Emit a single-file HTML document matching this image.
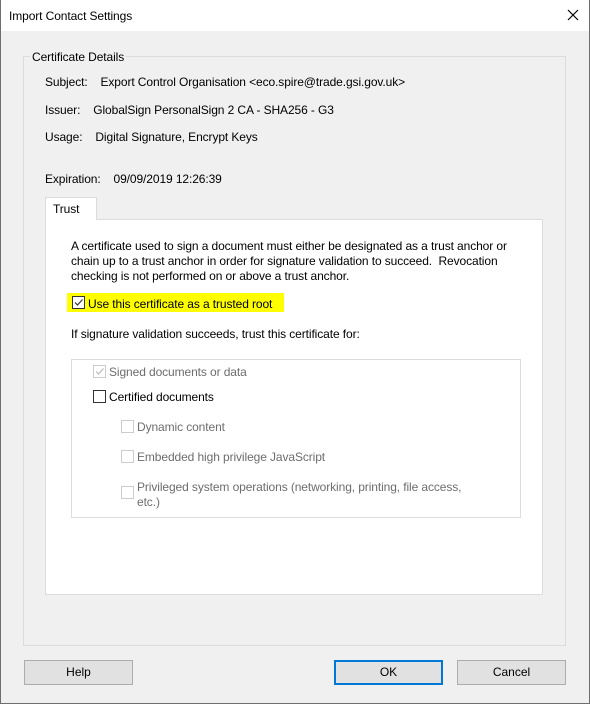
<!DOCTYPE html>
<html><head><style>
*{margin:0;padding:0;box-sizing:border-box}
body{width:590px;height:704px;background:#f0f0f0;font-family:"Liberation Sans",sans-serif;font-size:12px;color:#000;position:relative;overflow:hidden}
.a{position:absolute;white-space:nowrap}
.t{margin-top:1px;letter-spacing:-0.1px}
.cb{position:absolute;width:13px;height:13px;border:1px solid #333;background:#fff}
.cb.d{border-color:#ccc}
.btn{position:absolute;height:25px;border:1px solid #adadad;background:#e1e1e1;text-align:center;line-height:23px}
.g{color:#6d6d6d}
</style></head><body>
<div style="position:absolute;left:0;top:0;width:590px;height:704px;border:1px solid #6e6e6e;border-top:none"></div>
<div style="position:absolute;left:1px;top:0;width:588px;height:31px;background:#fff"></div>
<div class="a t" style="left:9px;top:8px;font-size:12px">Import Contact Settings</div>
<svg class="a" style="left:567px;top:9px" width="12" height="12"><path d="M1 1L11 11M11 1L1 11" stroke="#000" stroke-width="1.2"/></svg>

<div style="position:absolute;left:23px;top:56px;width:543px;height:590px;border:1px solid #dcdcdc"></div>
<div class="a t" style="left:30px;top:49px;background:#f0f0f0;padding:0 2px">Certificate Details</div>
<div class="a t" style="left:45px;top:74px">Subject:&nbsp;&nbsp;&nbsp; Export Control Organisation &lt;eco.spire@trade.gsi.gov.uk&gt;</div>
<div class="a t" style="left:45px;top:102px">Issuer:&nbsp;&nbsp;&nbsp; GlobalSign PersonalSign 2 CA - SHA256 - G3</div>
<div class="a t" style="left:45px;top:129px">Usage:&nbsp;&nbsp;&nbsp; Digital Signature, Encrypt Keys</div>
<div class="a t" style="left:45px;top:171px">Expiration:&nbsp;&nbsp;&nbsp; 09/09/2019 12:26:39</div>

<div style="position:absolute;left:45px;top:219px;width:498px;height:376px;background:#fff;border:1px solid #dcdcdc"></div>
<div style="position:absolute;left:45px;top:197px;width:52px;height:23px;background:#fff;border:1px solid #dcdcdc;border-bottom:none"></div>
<div class="a t" style="left:53px;top:201px">Trust</div>

<div class="a t" style="left:71px;top:238px;line-height:15px">A certificate used to sign a document must either be designated as a trust anchor or<br>chain up to a trust anchor in order for signature validation to succeed.&nbsp; Revocation<br>checking is not performed on or above a trust anchor.</div>
<div style="position:absolute;left:67px;top:293px;width:217px;height:19px;background:#ffff00"></div>
<div class="cb" style="left:72px;top:296px"></div>
<svg class="a" style="left:73px;top:297px" width="11" height="11"><path d="M2 5.5L4.5 8L9.5 2.5" stroke="#333" stroke-width="1.2" fill="none"/></svg>
<div class="a t" style="left:88px;top:296px">Use this certificate as a trusted root</div>
<div class="a t" style="left:71px;top:326px">If signature validation succeeds, trust this certificate for:</div>

<div style="position:absolute;left:71px;top:359px;width:450px;height:159px;border:1px solid #dcdcdc"></div>
<div class="cb d" style="left:93px;top:365px"></div>
<svg class="a" style="left:94px;top:366px" width="11" height="11"><path d="M2 5.5L4.5 8L9.5 2.5" stroke="#bbb" stroke-width="1.2" fill="none"/></svg>
<div class="a g t" style="left:109px;top:364px">Signed documents or data</div>
<div class="cb" style="left:93px;top:390px"></div>
<div class="a t" style="left:109px;top:389px">Certified documents</div>
<div class="cb d" style="left:121px;top:420px"></div>
<div class="a g t" style="left:137px;top:419px">Dynamic content</div>
<div class="cb d" style="left:121px;top:450px"></div>
<div class="a g t" style="left:137px;top:449px">Embedded high privilege JavaScript</div>
<div class="cb d" style="left:121px;top:486px"></div>
<div class="a g t" style="left:137px;top:479px;line-height:15px">Privileged system operations (networking, printing, file access,<br>etc.)</div>

<div class="btn" style="left:24px;top:660px;width:109px">Help</div>
<div class="btn" style="left:334px;top:660px;width:109px;border:2px solid #0078d7;line-height:21px">OK</div>
<div class="btn" style="left:457px;top:660px;width:109px">Cancel</div>
</body></html>
